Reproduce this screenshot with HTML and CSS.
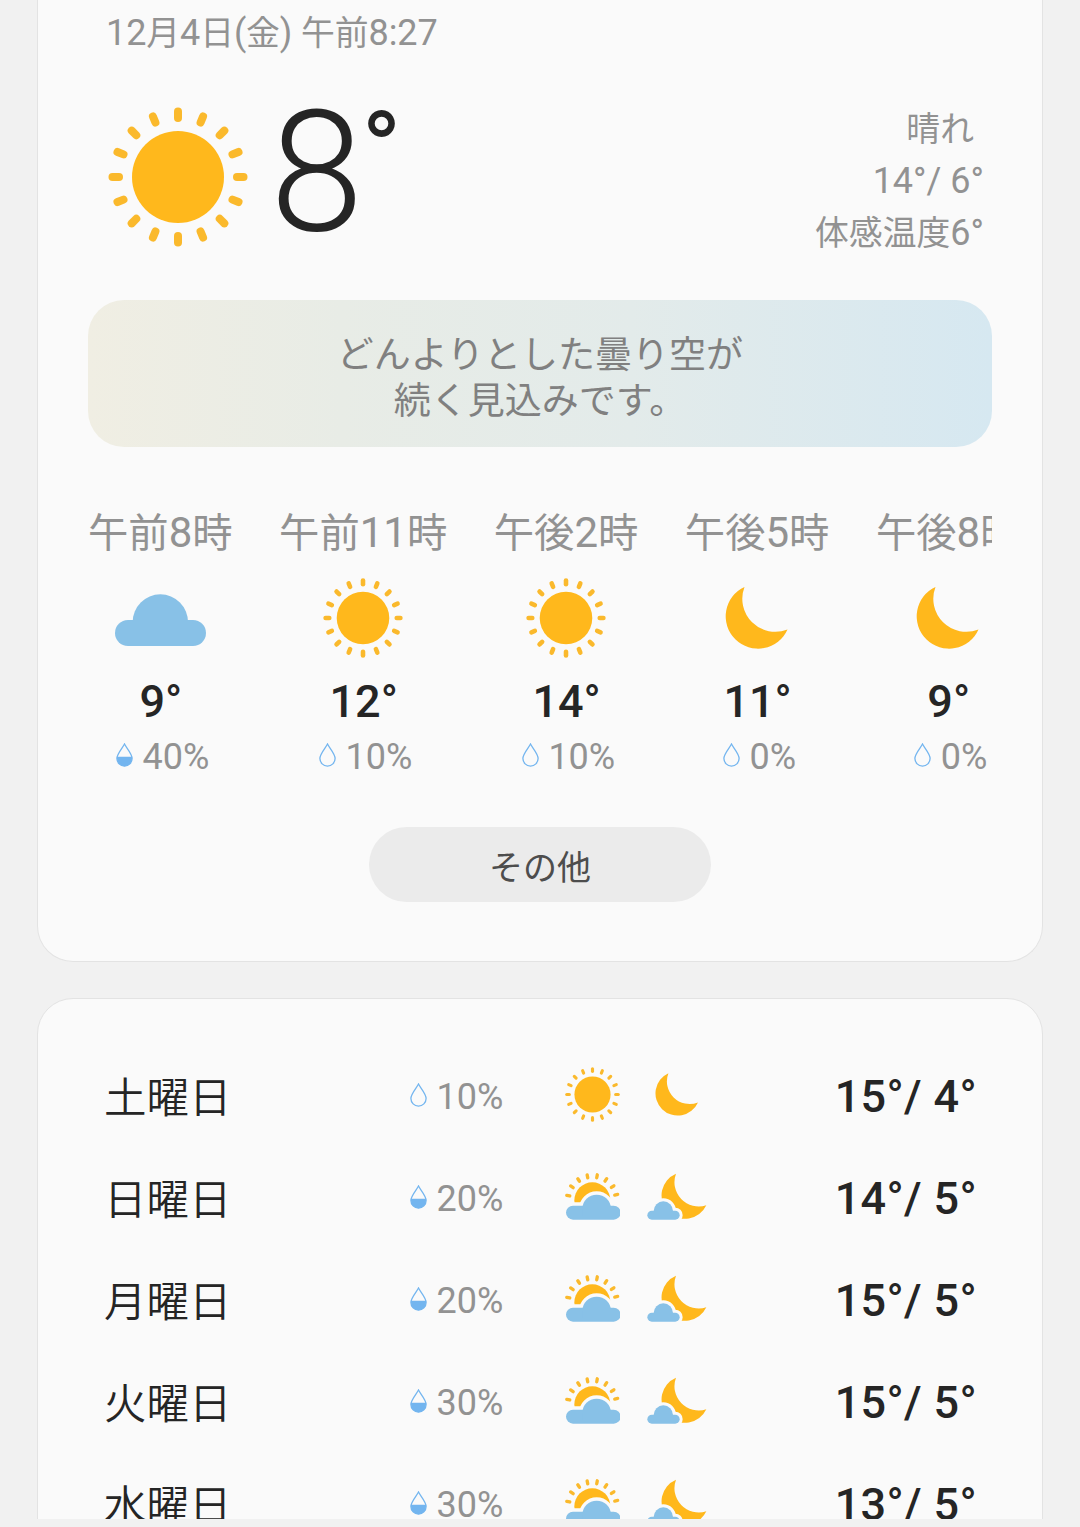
FILE: index.html
```html
<!DOCTYPE html>
<html lang="ja">
<head>
  <meta charset="UTF-8">
  <meta name="viewport" content="width=device-width, initial-scale=1.0">
  <title>天気</title>
  <link rel="stylesheet" href="styles.css">
</head>
<body>
  <svg class="defs" width="0" height="0">
    <defs>
      <path id="ray" d="M0-59V-65.5"></path>
      <symbol id="sun" viewBox="-70 -70 140 140">
        <circle r="46" fill="#ffb81c"></circle>
        <g stroke="#fab92c" stroke-width="8" stroke-linecap="round">
          <use href="#ray"></use>
          <use href="#ray" transform="rotate(22.5)"></use>
          <use href="#ray" transform="rotate(45)"></use>
          <use href="#ray" transform="rotate(67.5)"></use>
          <use href="#ray" transform="rotate(90)"></use>
          <use href="#ray" transform="rotate(112.5)"></use>
          <use href="#ray" transform="rotate(135)"></use>
          <use href="#ray" transform="rotate(157.5)"></use>
          <use href="#ray" transform="rotate(180)"></use>
          <use href="#ray" transform="rotate(202.5)"></use>
          <use href="#ray" transform="rotate(225)"></use>
          <use href="#ray" transform="rotate(247.5)"></use>
          <use href="#ray" transform="rotate(270)"></use>
          <use href="#ray" transform="rotate(292.5)"></use>
          <use href="#ray" transform="rotate(315)"></use>
          <use href="#ray" transform="rotate(337.5)"></use>
        </g>
      </symbol>
      <symbol id="moon" viewBox="0 0 80 80">
        <path fill="#ffb81c" d="M27.5 9A32.3 32.3 0 1 0 70.5 51.5A33 33 0 0 1 27.5 9z"></path>
      </symbol>
      <symbol id="cloud" viewBox="0 0 300 240">
        <g fill="#88c1e7">
          <rect x="15" y="126" width="273" height="78" rx="39"></rect>
          <path d="M68 132a83 83 0 0 1 166 0v60H68z"></path>
        </g>
      </symbol>
      <!-- 晴れ時々くもり -->
      <symbol id="sun-cloud" viewBox="0 0 165 165">
        <circle cx="82" cy="94" r="54" fill="#ffb81c"></circle>
        <g fill="#fafafa" stroke="#fafafa" stroke-width="20">
          <rect x="3" y="110" width="164" height="42" rx="21"></rect>
          <path d="M52 120a43 43 0 0 1 86 0v22H52z"></path>
        </g>
        <g fill="#88c1e7">
          <rect x="3" y="110" width="164" height="42" rx="21"></rect>
          <path d="M52 120a43 43 0 0 1 86 0v22H52z"></path>
        </g>
        <g stroke="#fab92c" stroke-width="10" stroke-linecap="round">
          <path d="M0-69V-78" transform="translate(82 94) rotate(-79)"></path>
          <path d="M0-69V-78" transform="translate(82 94) rotate(-56.5)"></path>
          <path d="M0-69V-78" transform="translate(82 94) rotate(-34)"></path>
          <path d="M0-69V-78" transform="translate(82 94) rotate(-11.5)"></path>
          <path d="M0-69V-78" transform="translate(82 94) rotate(11)"></path>
          <path d="M0-69V-78" transform="translate(82 94) rotate(33.5)"></path>
          <path d="M0-69V-78" transform="translate(82 94) rotate(56)"></path>
          <path d="M0-69V-78" transform="translate(82 94) rotate(77)"></path>
        </g>
      </symbol>
      <symbol id="moon-cloud" viewBox="0 0 180 165">
        <path fill="#ffb81c" d="M87 14A70.5 70.5 0 1 0 178 109A73 73 0 0 1 87 14z"></path>
        <g fill="#fafafa" stroke="#fafafa" stroke-width="18">
          <rect x="1" y="125" width="97" height="27" rx="13.5"></rect>
          <path d="M20 126a29 29 0 0 1 58 0v16H20z"></path>
        </g>
        <g fill="#88c1e7">
          <rect x="1" y="125" width="97" height="27" rx="13.5"></rect>
          <path d="M20 126a29 29 0 0 1 58 0v16H20z"></path>
        </g>
      </symbol>
      <symbol id="drop" viewBox="0 0 17 24">
        <path fill="none" stroke="#73b5ef" stroke-width="1.3" d="M8.5 1C6.6 5 .9 10.6.9 15.5a7.6 7.6 0 0 0 15.2 0C16.1 10.6 10.4 5 8.5 1z"></path>
      </symbol>
      <symbol id="drop-half" viewBox="0 0 17 24">
        <path fill="none" stroke="#73b5ef" stroke-width="1.3" d="M8.5 1C6.6 5 .9 10.6.9 15.5a7.6 7.6 0 0 0 15.2 0C16.1 10.6 10.4 5 8.5 1z"></path>
        <path fill="#73b5ef" d="M1 13.7h15v2a7.5 7.5 0 0 1-15 0z"></path>
      </symbol>
    </defs>
  </svg>

  <main class="screen">
    <section class="card today">
      <p class="date">12<span class="ja">月</span>4<span class="ja">日</span>(<span class="ja">金</span>) <span class="ja">午前</span>8:27</p>

      <div class="current">
        <svg class="current-icon"><use href="#sun"></use></svg>
        <p class="current-temp">8<span class="deg">°</span></p>
        <div class="summary">
          <p class="condition"><span class="ja">晴れ</span></p>
          <p>14°/ 6°</p>
          <p><span class="ja">体感温度</span>6°</p>
        </div>
      </div>

      <div class="banner">どんよりとした曇り空が<br>続く見込みです。</div>

      <div class="hourly">
        <div class="hour">
          <p class="time"><span class="ja">午前</span>8<span class="ja">時</span></p>
          <svg class="hour-icon wide"><use href="#cloud"></use></svg>
          <p class="temp">9°</p>
          <p class="rain"><svg class="drop"><use href="#drop-half"></use></svg>40%</p>
        </div>
        <div class="hour">
          <p class="time"><span class="ja">午前</span>11<span class="ja">時</span></p>
          <svg class="hour-icon"><use href="#sun"></use></svg>
          <p class="temp">12°</p>
          <p class="rain"><svg class="drop"><use href="#drop"></use></svg>10%</p>
        </div>
        <div class="hour">
          <p class="time"><span class="ja">午後</span>2<span class="ja">時</span></p>
          <svg class="hour-icon"><use href="#sun"></use></svg>
          <p class="temp">14°</p>
          <p class="rain"><svg class="drop"><use href="#drop"></use></svg>10%</p>
        </div>
        <div class="hour">
          <p class="time"><span class="ja">午後</span>5<span class="ja">時</span></p>
          <svg class="hour-icon"><use href="#moon"></use></svg>
          <p class="temp">11°</p>
          <p class="rain"><svg class="drop"><use href="#drop"></use></svg>0%</p>
        </div>
        <div class="hour">
          <p class="time"><span class="ja">午後</span>8<span class="ja">時</span></p>
          <svg class="hour-icon"><use href="#moon"></use></svg>
          <p class="temp">9°</p>
          <p class="rain"><svg class="drop"><use href="#drop"></use></svg>0%</p>
        </div>
      </div>

      <button class="more" type="button">その他</button>
    </section>

    <section class="card week">
      <div class="day">
        <p class="name">土曜日</p>
        <p class="rain"><svg class="drop"><use href="#drop"></use></svg>10%</p>
        <div class="icons"><svg class="day-icon"><use href="#sun"></use></svg><svg class="night-icon"><use href="#moon"></use></svg></div>
        <p class="range">15°/ 4°</p>
      </div>
      <div class="day">
        <p class="name">日曜日</p>
        <p class="rain"><svg class="drop"><use href="#drop-half"></use></svg>20%</p>
        <div class="icons"><svg class="day-icon"><use href="#sun-cloud"></use></svg><svg class="night-icon"><use href="#moon-cloud"></use></svg></div>
        <p class="range">14°/ 5°</p>
      </div>
      <div class="day">
        <p class="name">月曜日</p>
        <p class="rain"><svg class="drop"><use href="#drop-half"></use></svg>20%</p>
        <div class="icons"><svg class="day-icon"><use href="#sun-cloud"></use></svg><svg class="night-icon"><use href="#moon-cloud"></use></svg></div>
        <p class="range">15°/ 5°</p>
      </div>
      <div class="day">
        <p class="name">火曜日</p>
        <p class="rain"><svg class="drop"><use href="#drop-half"></use></svg>30%</p>
        <div class="icons"><svg class="day-icon"><use href="#sun-cloud"></use></svg><svg class="night-icon"><use href="#moon-cloud"></use></svg></div>
        <p class="range">15°/ 5°</p>
      </div>
      <div class="day">
        <p class="name">水曜日</p>
        <p class="rain"><svg class="drop"><use href="#drop-half"></use></svg>30%</p>
        <div class="icons"><svg class="day-icon"><use href="#sun-cloud"></use></svg><svg class="night-icon"><use href="#moon-cloud"></use></svg></div>
        <p class="range">13°/ 5°</p>
      </div>
    </section>
  </main>
</body>
</html>
```
FILE: styles.css
```css
* {
  box-sizing: border-box;
}

body {
  margin: 0;
  background: #f1f1f1;
  color: #252525;
  font-family: Roboto, "Noto Sans CJK JP", sans-serif;
}

p {
  margin: 0;
}

svg {
  display: block;
  flex: none;
}

.defs {
  position: absolute;
}

.screen {
  height: 1519px;
  padding: 0 37px;
  overflow: hidden;
}

.card {
  background: #fafafa;
  border: 1px solid #e3e3e3;
}

/* 漢字・かなは数字より少し小さい */
.ja {
  font-size: 0.94em;
  font-weight: 400;
  line-height: 0;
}

.today {
  height: 962px;
  padding: 15px 50px 0;
  border-top: 0;
  border-radius: 0 0 36px 36px;
}

.date {
  height: 36px;
  padding-left: 18px;
  font-size: 36px;
  line-height: 36px;
  letter-spacing: -0.1px;
  color: #929292;
  white-space: nowrap;
}

.current {
  display: flex;
  height: 249px;
  padding: 56px 8px 0 20px;
}

.current-icon {
  width: 140px;
  height: 140px;
}

.current-temp {
  display: flex;
  margin-left: 22px;
  font-size: 168px;
  font-weight: 300;
  line-height: 132px;
}

.deg {
  margin-left: -2px;
  font-size: 108px;
  font-weight: 400;
  line-height: 88px;
}

.summary {
  margin-top: -4px;
  margin-left: auto;
  font-size: 36px;
  line-height: 52px;
  color: #929292;
  text-align: right;
}

.condition {
  padding-right: 10px;
}

.banner {
  height: 147px;
  padding-top: 33px;
  border-radius: 36px;
  background: linear-gradient(90deg, #f0eee3 0%, #e8ece6 28%, #e3ebea 60%, #d6e8f1 100%);
  color: #808080;
  font-size: 37px;
  font-weight: 400;
  line-height: 46px;
  text-align: center;
}

.hourly {
  display: flex;
  gap: 46.5px;
  height: 380px;
  padding-top: 65px;
  overflow: hidden;
}

.hour {
  display: flex;
  flex: none;
  flex-direction: column;
  align-items: center;
}

.time {
  height: 42px;
  font-size: 42px;
  line-height: 42px;
  color: #929292;
  white-space: nowrap;
}

.time .ja {
  font-size: 0.96em;
}

.hour-icon {
  width: 80px;
  height: 80px;
  margin: 24px 0 21px;
}

.hour-icon.wide {
  width: 100px;
}

.temp {
  padding-left: 1px;
  font-size: 45px;
  font-weight: 500;
  line-height: 45px;
}

.rain {
  display: flex;
  align-items: center;
  gap: 9.5px;
  font-size: 36px;
  line-height: 36px;
  color: #929292;
}

.hour .rain {
  margin-top: 15px;
  padding-left: 5px;
}

.drop {
  width: 17px;
  height: 24px;
  margin-bottom: 5px;
}

.more {
  display: block;
  width: 342px;
  height: 75px;
  margin: 0 auto;
  padding: 2px 0 0;
  border: 0;
  border-radius: 38px;
  background: #ebebeb;
  color: #4d4d4d;
  font-family: inherit;
  font-size: 34px;
  font-weight: 400;
}

.week {
  height: 700px;
  margin-top: 36px;
  padding: 46px 65px 0 66px;
  border-radius: 36px;
}

.day {
  display: grid;
  grid-template-columns: 306px 155px 160px 1fr;
  align-items: center;
  height: 102px;
}

.day .rain {
  padding-top: 2px;
}

.name {
  padding-top: 6px;
  font-size: 42.5px;
  font-weight: 350;
  line-height: 60px;
}

.icons {
  display: flex;
  align-items: center;
  gap: 27px;
  margin-top: -4px;
}

.day-icon {
  width: 55px;
  height: 55px;
}

.night-icon {
  width: 60px;
  height: 55px;
}

.range {
  font-size: 45px;
  font-weight: 500;
  line-height: 45px;
  letter-spacing: 0.35px;
  text-align: right;
  white-space: pre;
}
```
